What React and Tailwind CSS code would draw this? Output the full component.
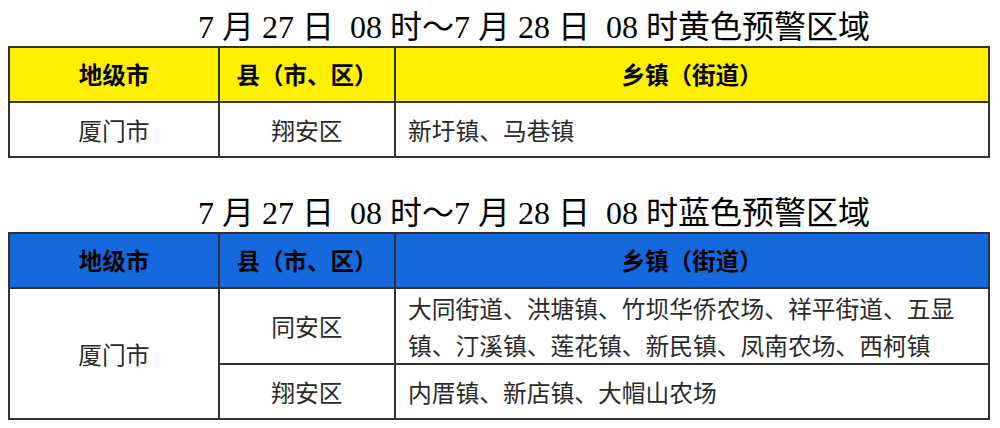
const sans = "font-['Noto_Sans_CJK_SC',sans-serif]";

function Title({ color }) {
  return (
    <div className="h-[46px] flex items-end pl-[198px] pb-[1px]">
      <h2 className="text-[32px] leading-[36px] text-black whitespace-pre font-['Liberation_Serif','Noto_Sans_CJK_SC',serif]">
        {`7 月 27 日  08 时～7 月 28 日  08 时${color}预警区域`}
      </h2>
    </div>
  );
}

function Head({ bg }) {
  return (
    <thead>
      <tr className={`${bg} h-[55px] text-[23.5px] font-bold text-black`}>
        <th className="border-2 border-[#333] w-[210px]">地级市</th>
        <th className="border-2 border-[#333] w-[176px]">县（市、区）</th>
        <th className="border-2 border-[#333]">乡镇（街道）</th>
      </tr>
    </thead>
  );
}

export default function App() {
  return (
    <div className={`w-[1000px] h-[428px] bg-white ${sans} text-[#2a2a2a]`}>
      <Title color="黄色" />
      <div className="pl-2 pr-[10px]">
        <table className="w-full border-collapse table-fixed">
          <Head bg="bg-[#fff000]" />
          <tbody className="text-[23.75px]">
            <tr className="h-[55px]">
              <td className="border-2 border-[#333] text-center">厦门市</td>
              <td className="border-2 border-[#333] text-center">翔安区</td>
              <td className="border-2 border-[#333] pl-[12px]">新圩镇、马巷镇</td>
            </tr>
          </tbody>
        </table>
      </div>

      <div className="mt-[28px]">
        <Title color="蓝色" />
      </div>
      <div className="pl-2 pr-[10px]">
        <table className="w-full border-collapse table-fixed">
          <Head bg="bg-[#1469dc]" />
          <tbody className="text-[23.75px]">
            <tr className="h-[76px]">
              <td rowSpan={2} className="border-2 border-[#333] text-center">
                厦门市
              </td>
              <td className="border-2 border-[#333] text-center">同安区</td>
              <td className="border-2 border-[#333] pl-[12px] pr-3 leading-[37px]">
                大同街道、洪塘镇、竹坝华侨农场、祥平街道、五显镇、汀溪镇、莲花镇、新民镇、凤南农场、西柯镇
              </td>
            </tr>
            <tr className="h-[55px]">
              <td className="border-2 border-[#333] text-center">翔安区</td>
              <td className="border-2 border-[#333] pl-[12px]">内厝镇、新店镇、大帽山农场</td>
            </tr>
          </tbody>
        </table>
      </div>
    </div>
  );
}
